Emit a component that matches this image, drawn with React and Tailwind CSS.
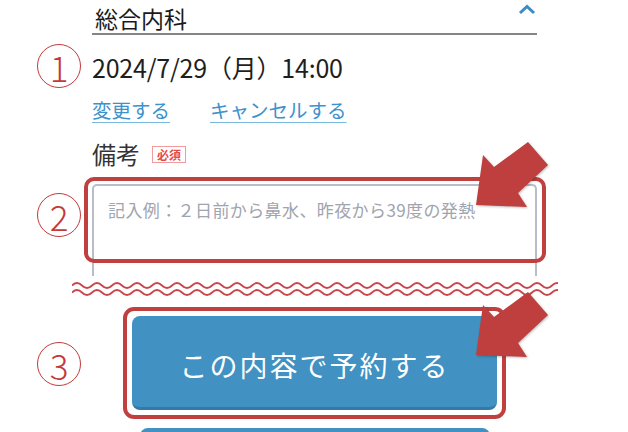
import React from "react";

// 波線（切り取り線）
function wavePath(y, width) {
  let d = `M0 ${y}`;
  for (let x = 0; x < width; x += 20) {
    d += ` q5 -5 10 0 q5 5 10 0`;
  }
  return d;
}

function Arrow({ className }) {
  return (
    <svg className={className} width="85" height="80" viewBox="0 0 85 80">
      <polygon
        points="6,70 13,20 24,32 58,7 78,30 48,58 57,72"
        fill="#bf3e3e"
        style={{ filter: "drop-shadow(1px 1px 1px rgba(0,0,0,0.25))" }}
      />
    </svg>
  );
}

function Num({ n, className }) {
  return (
    <div
      className={`absolute left-[37px] w-[44px] h-[44px] rounded-full border-[1.5px] border-[#c4393b] flex items-center justify-center text-[#c4393b] text-[35px] font-light leading-none ${className}`}
    >
      {n}
    </div>
  );
}

export default function App() {
  return (
    <div className="relative w-[628px] h-[432px] overflow-hidden bg-white font-['Noto_Sans_CJK_JP','Noto_Sans',sans-serif]">
      {/* 本文 */}
      <div className="ml-[92px] w-[445px]">
        {/* 診療科 */}
        <div className="flex h-[35px] items-start justify-between border-b-2 border-[#858585]">
          <span className="mt-[3px] pl-[3px] text-[23px] leading-[30px] text-[#1a1a1a]">総合内科</span>
          <svg className="mt-[4px] mr-[1px]" width="18" height="11" viewBox="0 0 18 11">
            <polyline points="2,9 9,2.5 16,9" fill="none" stroke="#3a8cc4" strokeWidth="3" />
          </svg>
        </div>

        {/* 日時 */}
        <p className="mt-[16px] text-[25px] leading-[32px] tracking-[-0.2px] text-[#1e1e1e]">2024/7/29（月）14:00</p>

        <div className="mt-[14px] flex gap-[40px] text-[19.5px] leading-[25px] text-[#3d92cc]">
          <a className="underline underline-offset-[4px] decoration-[#7ab8e0]">変更する</a>
          <a className="underline underline-offset-[4px] decoration-[#7ab8e0]">キャンセルする</a>
        </div>

        {/* 備考 */}
        <div className="mt-[17px] flex items-center">
          <span className="text-[24px] leading-[30px] text-[#333]">備考</span>
          <span className="ml-[12px] border border-[#f29b9b] px-[4px] text-[12px] leading-[15px] font-bold text-[#e54a4a]">
            必須
          </span>
        </div>

        <div className="mt-[15px] h-[92px] rounded-t-[5px] border-2 border-b-0 border-[#b9bdc9] pl-[14px] pt-[12px] text-[17px] leading-[24px] tracking-[0.4px] text-[#a0a4ae]">
          記入例：２日前から鼻水、昨夜から39度の発熱
        </div>

        {/* 波線 */}
        <svg className="mt-[5px] -ml-[20px] block" width="486" height="16" viewBox="0 0 486 16">
          <path d={wavePath(4.5, 486)} fill="none" stroke="#c8454a" strokeWidth="1.8" />
          <path d={wavePath(11.5, 486)} fill="none" stroke="#c8454a" strokeWidth="1.8" />
        </svg>

        {/* 予約ボタン */}
        <div className="mt-[10px] mx-auto w-[383px] rounded-[11px] border-4 border-[#c0403f] p-[5px]">
          <button className="flex h-[94px] w-full items-center justify-center rounded-[8px] border-b-[3px] border-[#3579a8] bg-[#4191c2] pt-[7px] text-[28px] tracking-[2px] text-white">
            この内容で予約する
          </button>
        </div>

        <div className="mt-[9px] mx-auto h-[20px] w-[350px] rounded-t-[8px] bg-[#4191c2]" />
      </div>

      {/* 注釈 */}
      <div className="absolute left-[84px] top-[177px] w-[462px] h-[86px] rounded-[10px] border-4 border-[#c0403f]" />
      <Num n="1" className="top-[44px]" />
      <Num n="2" className="top-[193px]" />
      <Num n="3" className="top-[342px]" />
      <Arrow className="absolute left-[470px] top-[135px]" />
      <Arrow className="absolute left-[470px] top-[285px]" />
    </div>
  );
}
